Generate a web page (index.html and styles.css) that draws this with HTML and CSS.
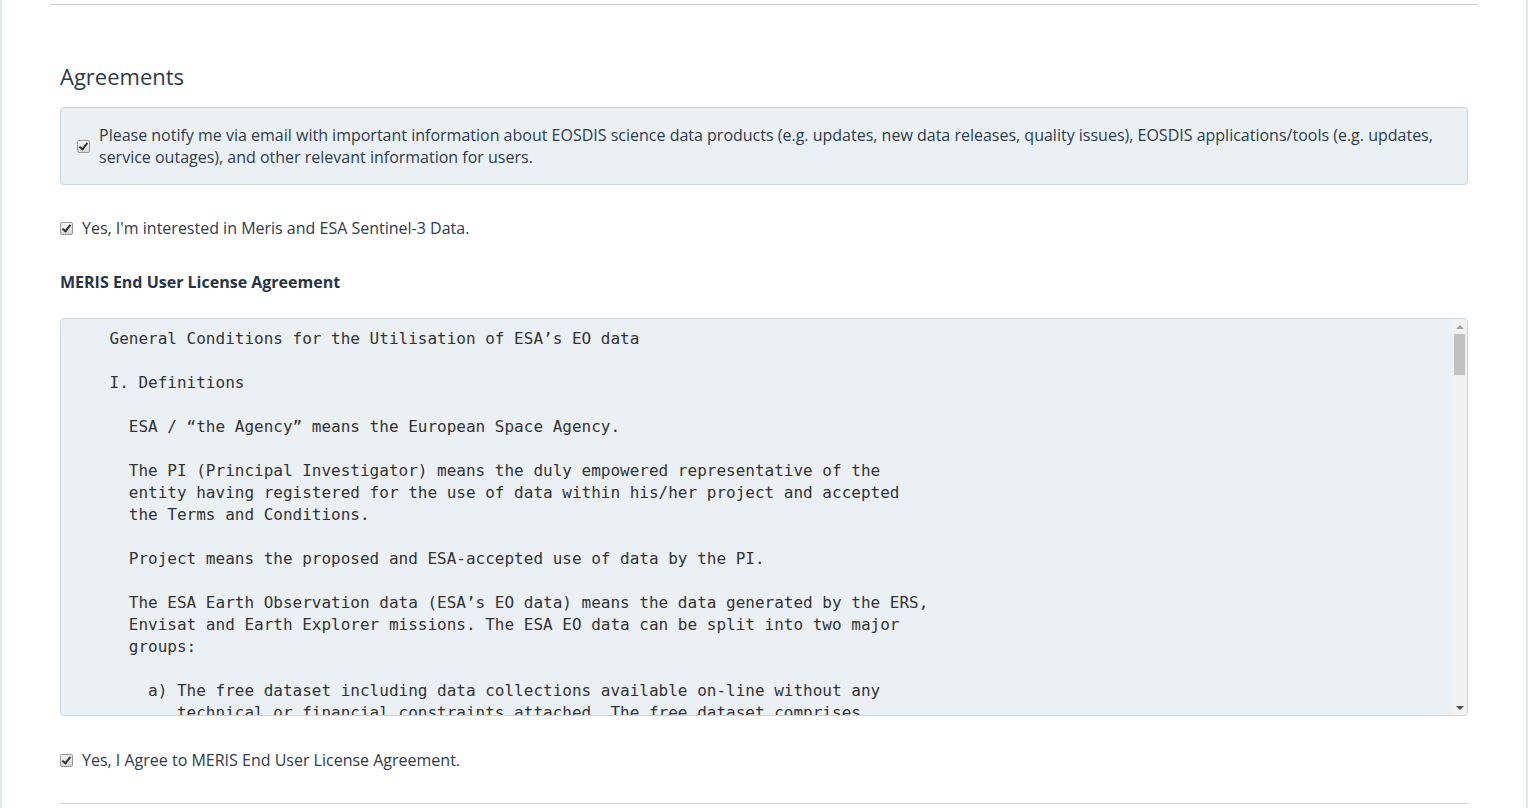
FILE: index.html
```html
<!DOCTYPE html>
<html lang="en">
<head>
<meta charset="utf-8">
<title>Agreements</title>
<link rel="stylesheet" href="styles.css">
</head>
<body>
<div class="page">
  <hr class="top-rule">
  <section class="section">
    <h2 class="title">Agreements</h2>
    <div class="notify">
      <input type="checkbox" class="cb" checked>
      <span class="notify-text">Please notify me via email with important information about EOSDIS science data products (e.g. updates, new data releases, quality issues), EOSDIS applications/tools (e.g. updates, service outages), and other relevant information for users.</span>
    </div>
    <label class="row row-interest"><input type="checkbox" class="cb" checked><span>Yes, I'm interested in Meris and ESA Sentinel-3 Data.</span></label>
    <h3 class="subtitle">MERIS End User License Agreement</h3>
    <div class="eula-wrap">
    <div class="eula">    General Conditions for the Utilisation of ESA’s EO data

    I. Definitions

      ESA / “the Agency” means the European Space Agency.

      The PI (Principal Investigator) means the duly empowered representative of the
      entity having registered for the use of data within his/her project and accepted
      the Terms and Conditions.

      Project means the proposed and ESA-accepted use of data by the PI.

      The ESA Earth Observation data (ESA’s EO data) means the data generated by the ERS,
      Envisat and Earth Explorer missions. The ESA EO data can be split into two major
      groups:

        a) The free dataset including data collections available on-line without any
           technical or financial constraints attached. The free dataset comprises
           the majority of the ESA EO data products available on-line and can be
           accessed directly by any registered user.

        b) The restricted dataset including data collections that have technical or
           financial constraints attached, and which can only be accessed upon
           submission of a project proposal and its acceptance by ESA.

      Third Party Mission data means the data generated by non-ESA missions and
      distributed by ESA under specific agreements with the data owners.

      Derived product means any product generated from the ESA EO data by the PI or
      on his/her behalf, which no longer allows the original data to be recovered.

    II. Scope

      These Terms and Conditions govern the use of ESA’s EO data by the PI and the
      entity he/she represents. By accepting these Terms and Conditions, the PI
      agrees to comply with all provisions set out herein, as well as with any
      additional conditions communicated by ESA in relation to specific datasets.

    III. Licence

      1. ESA grants the PI a non-exclusive, non-transferable, royalty-free licence
         to use the ESA EO data for the purpose of the Project, subject to the
         provisions of these Terms and Conditions.

      2. The PI may use the ESA EO data for research, education, application
         development and commercial purposes, unless otherwise specified for a
         particular dataset.

      3. The PI shall not distribute, sell or otherwise make available the ESA EO
         data to any third party, except to members of the entity he/she represents
         who are directly involved in the Project.

      4. Derived products may be distributed freely, provided that the original
         ESA EO data cannot be reconstructed from them.

    IV. Obligations of the PI

      1. The PI shall ensure that the ESA EO data are used only within the scope of
         the Project and in accordance with these Terms and Conditions.

      2. The PI shall inform ESA of any change in the Project, including changes in
         the persons involved or in the intended use of the data.

      3. The PI shall provide ESA, upon request, with a report on the results of the
         Project and on the use made of the ESA EO data.

      4. The PI shall acknowledge the source of the data in any publication or
         presentation resulting from the use of the ESA EO data, using the following
         wording: “Contains modified Copernicus data [Year] / ESA” or “Data provided
         by the European Space Agency”, as appropriate.

      5. The PI shall send ESA a copy of any publication resulting from the use of
         the ESA EO data.

    V. Intellectual Property Rights

      1. ESA retains all intellectual property rights in the ESA EO data. Nothing in
         these Terms and Conditions shall be construed as a transfer of ownership of
         the ESA EO data to the PI.

      2. The intellectual property rights in derived products shall belong to the
         PI or to the entity he/she represents, without prejudice to ESA’s rights in
         the underlying ESA EO data.

    VI. Liability

      1. The ESA EO data are provided “as is”. ESA makes no warranty, express or
         implied, as to the accuracy, completeness or fitness for a particular
         purpose of the ESA EO data.

      2. ESA shall not be liable for any damage, direct or indirect, resulting from
         the use of the ESA EO data or from the impossibility to use them.

      3. The PI shall hold ESA harmless against any claim by a third party arising
         from the use of the ESA EO data by the PI or by the entity he/she
         represents.

    VII. Duration and Termination

      1. These Terms and Conditions shall enter into force upon their acceptance by
         the PI and shall remain in force for the duration of the Project.

      2. ESA may terminate the licence granted herein at any time in the event of a
         breach of these Terms and Conditions by the PI.

      3. Upon termination, the PI shall cease any use of the ESA EO data and shall
         destroy all copies in his/her possession, with the exception of derived
         products.

    VIII. Applicable Law and Disputes

      1. These Terms and Conditions shall be governed by the rules and regulations
         of ESA and, where appropriate, by general principles of international law.

      2. Any dispute arising from the interpretation or application of these Terms
         and Conditions shall be settled amicably. Failing an amicable settlement,
         the dispute shall be submitted to arbitration in accordance with the
         arbitration rules of ESA.

    IX. Data Protection

      1. Personal data provided by the PI upon registration shall be processed by
         ESA solely for the purpose of managing the access to and the distribution
         of the ESA EO data.

      2. The PI may request access to, rectification or deletion of his/her
         personal data at any time by contacting ESA.

    X. Final Provisions

      1. ESA reserves the right to amend these Terms and Conditions at any time.
         The PI shall be informed of any amendment and shall be deemed to have
         accepted it if he/she continues to use the ESA EO data.

      2. Should any provision of these Terms and Conditions be held invalid, the
         remaining provisions shall continue in full force and effect.

      3. These Terms and Conditions constitute the entire agreement between ESA and
         the PI with respect to the use of the ESA EO data.
</div>
      <div class="fake-scroll" aria-hidden="true">
        <div class="sb-btn"><span class="tri-up"></span></div>
        <div class="sb-track"><div class="sb-thumb"></div></div>
        <div class="sb-btn"><span class="tri-down"></span></div>
      </div>
    </div>
    <label class="row row-agree"><input type="checkbox" class="cb" checked><span>Yes, I Agree to MERIS End User License Agreement.</span></label>
    <hr class="bottom-rule">
  </section>
</div>
</body>
</html>
```

FILE: styles.css
```css
html, body {
  margin: 0;
  padding: 0;
  background: #ffffff;
}

body {
  font-family: "Open Sans", "Noto Sans", sans-serif;
  font-size: 16px;
  line-height: 22px;
  color: #2d3b4c;
}

.page {
  min-height: 808px;
  box-sizing: border-box;
  border-left: 2px solid #e3e8e8;
  border-right: 2px solid #e3e8e8;
  padding: 4px 48px 0;
}

.top-rule {
  margin: 0;
  border: 0;
  border-top: 1px solid #cfcfcf;
  height: 0;
}

.section {
  padding: 0 10px;
}

.title {
  margin: 57px 0 0;
  font-size: 22px;
  line-height: 28px;
  font-weight: 400;
  color: #2b3a4c;
}

.notify {
  margin-top: 17px;
  display: flex;
  align-items: center;
  gap: 9px;
  padding: 16px 16px 16px;
  background: #ebf0f5;
  border: 1px solid #c8d5e0;
  border-radius: 4px;
}

.notify-text {
  flex: 1;
}

.row {
  display: flex;
  align-items: center;
  gap: 9px;
}

.row-interest {
  margin-top: 32px;
}

.subtitle {
  margin: 32px 0 0;
  font-size: 16px;
  line-height: 22px;
  font-weight: 700;
  color: #263547;
}

.eula-wrap {
  position: relative;
  margin-top: 25px;
}

.eula {
  height: 398px;
  box-sizing: border-box;
  padding: 9px 26px 8px 10px;
  overflow-y: scroll;
  overflow-x: hidden;
  scrollbar-width: none;
  white-space: pre;
  font-family: "DejaVu Sans Mono", monospace;
  font-size: 16px;
  line-height: 22px;
  color: #333333;
  background: #ebf0f5;
  border: 1px solid #c8d4de;
  border-radius: 4px;
}

.eula::-webkit-scrollbar {
  display: none;
}

.fake-scroll {
  position: absolute;
  top: 1px;
  right: 1px;
  bottom: 1px;
  width: 15px;
  background: #f1f1f1;
  border-radius: 0 3px 3px 0;
  display: flex;
  flex-direction: column;
}

.sb-btn {
  height: 15px;
  display: flex;
  align-items: center;
  justify-content: center;
}

.tri-up {
  width: 0;
  height: 0;
  border-left: 4px solid transparent;
  border-right: 4px solid transparent;
  border-bottom: 4px solid #a3a3a3;
}

.tri-down {
  width: 0;
  height: 0;
  border-left: 4px solid transparent;
  border-right: 4px solid transparent;
  border-top: 4px solid #505050;
}

.sb-track {
  flex: 1;
  padding: 0 2px;
}

.sb-thumb {
  height: 41px;
  background: #c1c1c1;
}

.row-agree {
  margin-top: 33px;
}

.bottom-rule {
  margin: 32px 0 0;
  border: 0;
  border-top: 1px solid #cbd5dd;
  height: 0;
}

.cb {
  appearance: none;
  -webkit-appearance: none;
  position: relative;
  flex: none;
  margin: 0;
  width: 13px;
  height: 13px;
  box-sizing: border-box;
  border: 1px solid #999999;
  border-radius: 2px;
  background: linear-gradient(#f4f4f4, #d6d6d6);
}

.cb:checked::after {
  content: "";
  position: absolute;
  left: 3px;
  top: 0px;
  width: 3px;
  height: 7px;
  border-right: 2.5px solid #333333;
  border-bottom: 2.5px solid #333333;
  transform: rotate(38deg);
}
```
